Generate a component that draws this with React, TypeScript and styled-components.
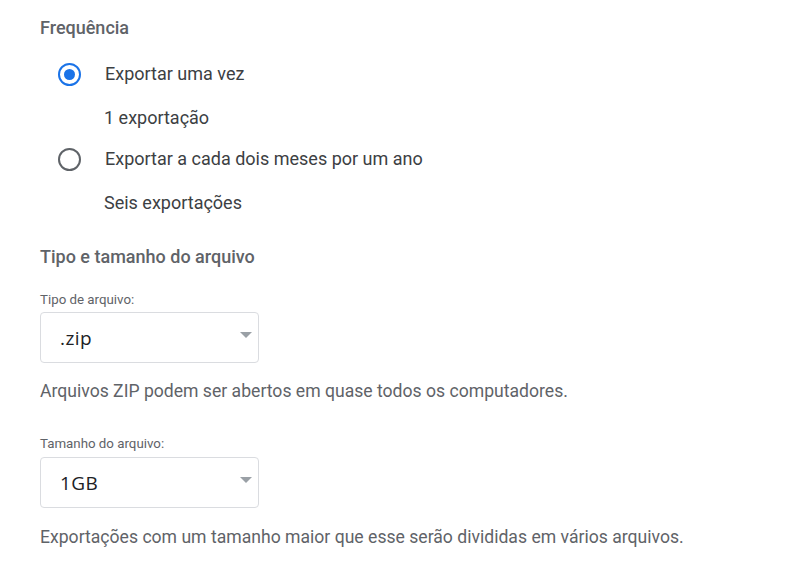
import React from "react";
import styled, { createGlobalStyle } from "styled-components";

const Global = createGlobalStyle`
  html, body { margin: 0; padding: 0; background: #ffffff; }
  body { font-family: Roboto, "Noto Sans", Arial, sans-serif; -webkit-font-smoothing: antialiased; }
`;

const Page = styled.div`
  width: 796px;
  height: 572px;
  box-sizing: border-box;
  padding: 16px 0 0 40px;
  display: flex;
  flex-direction: column;
  overflow: hidden;
`;

const SectionTitle = styled.h2<{ $mt?: number }>`
  margin: ${(p) => p.$mt ?? 0}px 0 0 0;
  font-family: Roboto, Arial, sans-serif;
  font-size: 18px;
  font-weight: 500;
  line-height: 24px;
  color: #5f6368;
`;

const OptionRow = styled.label<{ $mt: number }>`
  display: flex;
  align-items: center;
  height: 48px;
  margin-top: ${(p) => p.$mt}px;
  padding-left: 18px;
  gap: 24px;
  cursor: pointer;
`;

const Radio = styled.span<{ $checked: boolean }>`
  box-sizing: border-box;
  width: 23px;
  height: 23px;
  border-radius: 50%;
  border: 2px solid ${(p) => (p.$checked ? "#1a73e8" : "#5f6368")};
  display: flex;
  align-items: center;
  justify-content: center;
  flex-shrink: 0;
  &::after {
    content: "";
    display: ${(p) => (p.$checked ? "block" : "none")};
    width: 11px;
    height: 11px;
    border-radius: 50%;
    background: #1a73e8;
  }
`;

const OptionText = styled.span`
  font-size: 18px;
  line-height: 24px;
  color: #3c4043;
`;

const SubText = styled.div`
  margin-top: 8px;
  padding-left: 64px;
  font-size: 18px;
  line-height: 24px;
  color: #3c4043;
`;

const FieldLabel = styled.div<{ $mt: number }>`
  margin-top: ${(p) => p.$mt}px;
  font-size: 13.3px;
  line-height: 20px;
  color: #5f6368;
`;

const SelectBox = styled.div<{ $mt: number }>`
  box-sizing: border-box;
  margin-top: ${(p) => p.$mt}px;
  width: 219px;
  height: 51px;
  border: 1px solid #dadce0;
  border-radius: 4px;
  display: flex;
  align-items: center;
  justify-content: space-between;
  padding: 0 6px 0 19px;
`;

const SelectValue = styled.span`
  font-family: "Open Sans", Roboto, Arial, sans-serif;
  font-size: 19px;
  letter-spacing: 0.4px;
  color: #202124;
`;

const Arrow = styled.span`
  width: 0;
  height: 0;
  border-left: 6.5px solid transparent;
  border-right: 6.5px solid transparent;
  border-top: 6px solid #9aa0a6;
  align-self: flex-start;
  margin-top: 19px;
`;

const Help = styled.div<{ $mt: number }>`
  margin-top: ${(p) => p.$mt}px;
  font-size: 17.6px;
  line-height: 24px;
  color: #5f6368;
`;

export default function App() {
  return (
    <>
      <Global />
      <Page>
        <SectionTitle>Frequência</SectionTitle>
        <OptionRow $mt={10}>
          <Radio $checked />
          <OptionText>Exportar uma vez</OptionText>
        </OptionRow>
        <SubText>1 exportação</SubText>
        <OptionRow $mt={5}>
          <Radio $checked={false} />
          <OptionText>Exportar a cada dois meses por um ano</OptionText>
        </OptionRow>
        <SubText>Seis exportações</SubText>

        <SectionTitle $mt={30}>Tipo e tamanho do arquivo</SectionTitle>
        <FieldLabel $mt={21}>Tipo de arquivo:</FieldLabel>
        <SelectBox $mt={2}>
          <SelectValue>.zip</SelectValue>
          <Arrow />
        </SelectBox>
        <Help $mt={16}>Arquivos ZIP podem ser abertos em quase todos os computadores.</Help>

        <FieldLabel $mt={31}>Tamanho do arquivo:</FieldLabel>
        <SelectBox $mt={3}>
          <SelectValue>1GB</SelectValue>
          <Arrow />
        </SelectBox>
        <Help $mt={17}>Exportações com um tamanho maior que esse serão divididas em vários arquivos.</Help>
      </Page>
    </>
  );
}
